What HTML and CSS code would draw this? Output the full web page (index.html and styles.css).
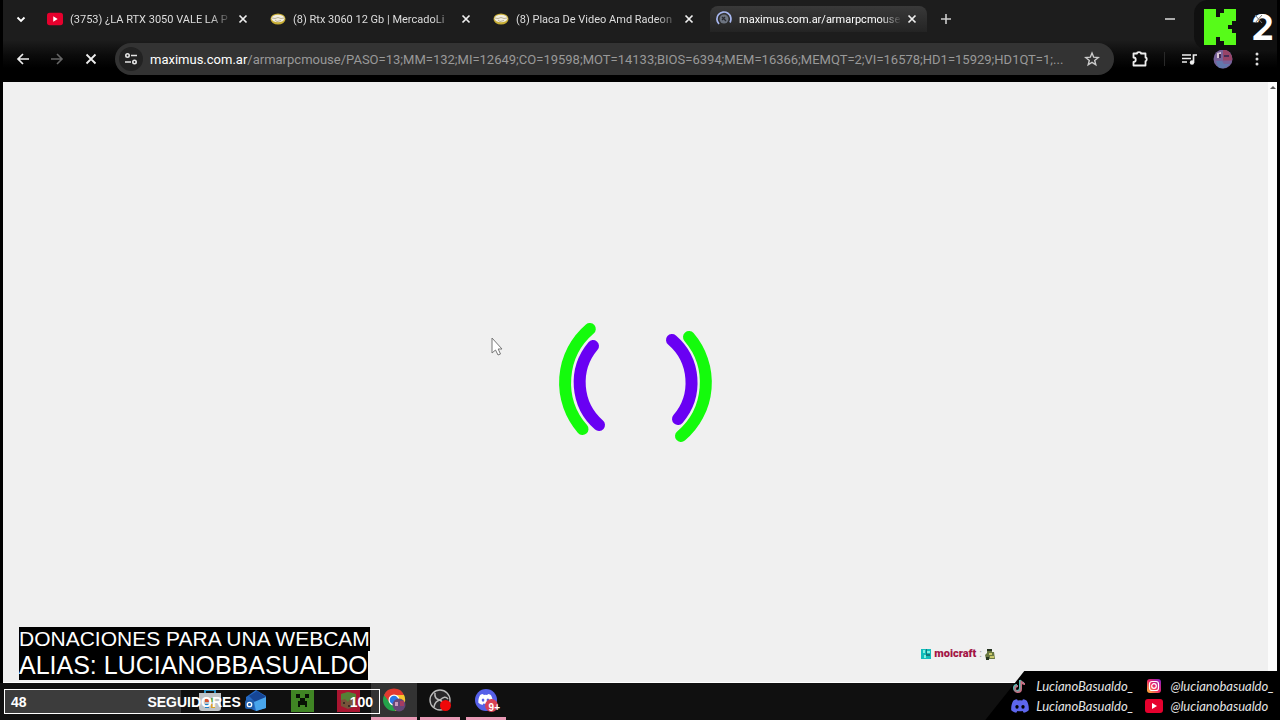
FILE: index.html
```html
<!DOCTYPE html>
<html lang="es">
<head>
<meta charset="utf-8">
<title>maximus.com.ar</title>
<link rel="stylesheet" href="styles.css">
</head>
<body>
<svg class="defs" aria-hidden="true">
  <symbol id="close" viewBox="0 0 12 12"><path d="M2.500 2.500l7 7m0-7l-7 7" fill="none" stroke="currentColor" stroke-width="1.700"/></symbol>
  <symbol id="youtube" viewBox="0 0 18 14"><rect width="18" height="14" rx="3" fill="#e6002d"/><path d="M7 4l5 3-5 3z" fill="#fff"/></symbol>
  <symbol id="mercado" viewBox="0 0 16 12"><ellipse cx="8" cy="6" rx="7.500" ry="5.500" fill="#c7ad35"/><ellipse cx="8" cy="5.500" rx="6.500" ry="3.800" fill="#f2eee0"/><path d="M2 5l3 .5 3-1 3 1 3-.5M5 7l2 1.500 2-.5 2-.5" fill="none" stroke="#a99f80" stroke-width=".8"/></symbol>
  <symbol id="discord" viewBox="0 0 24 18"><path d="M8 0C5 .5 3.500 1.500 3 2 1 5.500 0 9.500.300 14.500 2.500 16.500 5 17.500 7 18l1.500-2.500q3.500 1 7 0L17 18c2-.5 4.500-1.500 6.700-3.500C24 9.500 23 5.500 21 2c-.5-.5-2-1.500-5-2l-1 1.600q-3-.5-6 0z" fill="currentColor"/><ellipse cx="8" cy="10" rx="2.200" ry="2.500"/><ellipse cx="16" cy="10" rx="2.200" ry="2.500"/></symbol>
</svg>

<header class="browser">
  <div class="tabstrip">
    <button class="icon-btn tab-search" aria-label="Buscar pestañas"><svg width="12" height="12" viewBox="0 0 12 12"><path d="M2.500 4.500L6 8l3.500-3.500" fill="none" stroke="#fff" stroke-width="1.800"/></svg></button>
    <nav class="tabs">
      <div class="tab"><svg class="favicon"><use href="#youtube"/></svg><span class="tab-title">(3753) ¿LA RTX 3050 VALE LA P</span><button class="icon-btn tab-close" aria-label="Cerrar"><svg width="12" height="12"><use href="#close"/></svg></button></div>
      <div class="tab"><svg class="favicon"><use href="#mercado"/></svg><span class="tab-title">(8) Rtx 3060 12 Gb | MercadoLi</span><button class="icon-btn tab-close" aria-label="Cerrar"><svg width="12" height="12"><use href="#close"/></svg></button></div>
      <div class="tab"><svg class="favicon"><use href="#mercado"/></svg><span class="tab-title">(8) Placa De Video Amd Radeon</span><button class="icon-btn tab-close" aria-label="Cerrar"><svg width="12" height="12"><use href="#close"/></svg></button></div>
      <div class="tab active"><svg class="favicon" viewBox="0 0 16 16"><circle cx="8" cy="8" r="4.500" fill="#6d7480"/><path d="M6 6l4 4M6 9l3-3" stroke="#292b31" stroke-width="1.300"/><path d="M3 13A7 7 0 1 1 14 11.500" fill="none" stroke="#a8b8f0" stroke-width="1.700"/></svg><span class="tab-title">maximus.com.ar/armarpcmouse</span><button class="icon-btn tab-close" aria-label="Cerrar"><svg width="12" height="12"><use href="#close"/></svg></button></div>
    </nav>
    <button class="icon-btn new-tab" aria-label="Nueva pestaña"><svg width="12" height="12" viewBox="0 0 12 12"><path d="M6 1v10M1 6h10" stroke="#ccc" stroke-width="1.600"/></svg></button>
    <button class="icon-btn minimize" aria-label="Minimizar"><svg width="10" height="10" viewBox="0 0 10 10"><path d="M0 5h10" stroke="#ddd" stroke-width="1.500"/></svg></button>
  </div>
  <div class="toolbar">
    <div class="nav-buttons">
      <button class="icon-btn" aria-label="Atrás"><svg width="14" height="14" viewBox="0 0 14 14"><path d="M13 7H2M7 2L2 7l5 5" fill="none" stroke="#eee" stroke-width="1.700"/></svg></button>
      <button class="icon-btn" aria-label="Adelante"><svg width="14" height="14" viewBox="0 0 14 14"><path d="M1 7h11M7 2l5 5-5 5" fill="none" stroke="#666" stroke-width="1.600"/></svg></button>
      <button class="icon-btn" aria-label="Detener"><svg width="14" height="14" viewBox="0 0 14 14"><path d="M2.500 2.500l9 9m0-9l-9 9" stroke="#eee" stroke-width="1.800"/></svg></button>
    </div>
    <div class="address">
      <button class="icon-btn site-info" aria-label="Información del sitio"><svg width="14" height="14" viewBox="0 0 14 14"><g fill="none" stroke="#e4e4e4" stroke-width="1.600"><circle cx="3.500" cy="3.500" r="1.700"/><path d="M7 3.500h6M1 10h6"/><circle cx="10.500" cy="10" r="1.700"/></g></svg></button>
      <label class="domain" for="url">maximus.com.ar</label>
      <input class="path" id="url" type="text" value="/armarpcmouse/PASO=13;MM=132;MI=12649;CO=19598;MOT=14133;BIOS=6394;MEM=16366;MEMQT=2;VI=16578;HD1=15929;HD1QT=1;...">
      <button class="icon-btn" aria-label="Favorito"><svg width="16" height="16" viewBox="0 0 16 16"><path d="M8 2l1.700 4.200 4.500.3-3.500 2.900 1.100 4.400L8 11.400l-3.800 2.400 1.100-4.400L1.800 6.500l4.500-.3z" fill="none" stroke="#ccc" stroke-width="1.400"/></svg></button>
    </div>
    <div class="actions">
      <button class="icon-btn" aria-label="Extensiones"><svg width="18" height="18" viewBox="0 0 18 18"><path d="M2.500 3.500h3.500a2 1.400 0 0 1 4 0h4.500v4a1.200 1.800 0 0 1 0 3.600v4.400h-12v-3.500a2 2 0 0 0 0-4.500z" fill="none" stroke="#eee" stroke-width="1.800" stroke-linejoin="round"/></svg></button>
      <span class="separator"></span>
      <button class="icon-btn" aria-label="Multimedia"><svg width="16" height="14" viewBox="0 0 16 14"><path d="M1 3h9M1 6.500h9M1 10h5" stroke="#eee" stroke-width="1.700"/><path d="M12.500 10.500V3H16" fill="none" stroke="#eee" stroke-width="1.700"/><circle cx="11" cy="10.500" r="2.200" fill="#eee"/></svg></button>
      <button class="icon-btn" aria-label="Perfil"><svg width="20" height="20" viewBox="0 0 20 20"><circle cx="10" cy="10" r="9.500" fill="#78629a"/><path d="M10 .500a9.500 9.500 0 0 1 9 11H10z" fill="#984468"/><path d="M4 4l4-1v6H4z" fill="#d9c6d8"/><path d="M6 5h2v4H6zM11 6h5v2h-5z" fill="#472c55"/><path d="M3 12h6l2 3h6a9 9 0 0 1-12 3z" fill="#6278ad"/></svg></button>
      <button class="icon-btn" aria-label="Menú"><svg width="4" height="16" viewBox="0 0 4 16" fill="#ddd"><circle cx="2" cy="3" r="1.500"/><circle cx="2" cy="8" r="1.500"/><circle cx="2" cy="13" r="1.500"/></svg></button>
    </div>
  </div>
  <aside class="kick"><svg width="32" height="36" viewBox="0 0 32 36"><path d="M0 0h12v8h4V4h4V0h12v12h-4v4h-4v4h4v4h4v12H20v-4h-4v-4h-4v8H0z" fill="#57fb19"/></svg><span>2</span><svg class="maximize" width="9" height="10" viewBox="0 0 9 10"><path d="M1 1l7 8m0-8L1 9" stroke="#777" stroke-width="1"/></svg></aside>
</header>

<main class="page">
  <svg class="loader" viewBox="0 0 152 152" width="152" height="152" role="img" aria-label="Cargando"><g fill="none" stroke-width="12" stroke-linecap="round"><path d="M29.800 23A70.500 70.500 0 0 0 22.500 123M129 31A70 70 0 0 1 121 130" stroke="#14fb0c"/><path d="M33 40A56.500 56.500 0 0 0 39 119M112 34A56 56 0 0 1 118 113" stroke="#6900f3"/></g></svg>
  <div class="scrollbar"><svg width="6" height="4" viewBox="0 0 6 4"><path d="M0 4l3-3 3 3z" fill="#555"/></svg></div>
</main>

<footer class="taskbar">
  <button class="icon-btn app" aria-label="Tienda"><svg width="24" height="24" viewBox="0 0 24 24"><path d="M7 7V2h10v5" fill="none" stroke="#2a91c6" stroke-width="2"/><path d="M1 5h22v15q0 3-3 3H4q-3 0-3-3z" fill="#bfc3c6"/><path d="M7 10h4v4H7z" fill="#d8562c"/><path d="M13 10h4v4h-4z" fill="#5fa638"/><path d="M7 16h4v4H7z" fill="#1d81c7"/><path d="M13 16h4v4h-4z" fill="#dca528"/></svg></button>
  <button class="icon-btn app" aria-label="Correo"><svg width="24" height="24" viewBox="0 0 24 24"><path d="M2 9L12 2l10 6v12l-10 3-10-4z" fill="#2469c5"/><path d="M5 8l8-5 9 6-10 6z" fill="#164696"/><path d="M10 14l12-5v11l-10 3z" fill="#49a6ec"/><rect x="1" y="12" width="9" height="9" rx="2" fill="#205eaa"/><circle cx="5.500" cy="16.500" r="2.200" fill="none" stroke="#fff" stroke-width="1.300"/></svg></button>
  <button class="icon-btn app" aria-label="Minecraft"><svg width="24" height="24" viewBox="0 0 24 24"><path d="M1 1h23v23H1z" fill="#408524"/><path d="M6 6h4v4H6zM15 6h4v4h-4zM10 10h5v3h2v6h-2v-2h-5v2H8v-6h2z" fill="#071104"/></svg></button>
  <button class="icon-btn app" aria-label="Minecraft Launcher"><svg width="24" height="24" viewBox="0 0 24 24"><path d="M1 1h23v23H1z" fill="#a91530"/><path d="M5 6l7-2 8 2v12l-8 3-7-3z" fill="#78533a"/><path d="M5 6l7-2 8 2v4l-3 2-2-2-3 4-3-3-4 1z" fill="#568036"/><path d="M7 14h2v2H7zM12 17h3v2h-3z" fill="#3c2b23"/></svg></button>
  <button class="icon-btn app open focused" aria-label="Chrome"><svg width="24" height="24" viewBox="0 0 24 24"><circle cx="12" cy="12" r="11" fill="#24a34a"/><path d="M2 7A11 11 0 0 1 22 7L12 10l-4 5z" fill="#e23a30"/><path d="M12 7h10a11 11 0 0 1-9 16l4-9z" fill="#f7c52d"/><circle cx="12" cy="12" r="5.500" fill="#fff"/><circle cx="12" cy="12" r="4.300" fill="#2878e6"/><circle cx="17" cy="17" r="6.500" fill="#654778"/><path d="M13 14h3v4h-3z" fill="#c999ba"/><path d="M18 13h4v5h-4z" fill="#a63c61"/></svg></button>
  <button class="icon-btn app open" aria-label="OBS"><svg width="24" height="24" viewBox="0 0 24 24"><circle cx="12" cy="12" r="10" fill="#282729" stroke="#bbb" stroke-width="1.400"/><path d="M7 5q-1 6 5 7 5-5 8-1M12 12q-5 1-6 7M12 12q5 3 2 8" fill="none" stroke="#bbb" stroke-width="1.500"/><circle cx="17.500" cy="17.500" r="5.500" fill="#f00808"/></svg></button>
  <button class="icon-btn app open" aria-label="Discord"><svg width="24" height="24" viewBox="0 0 24 24"><circle cx="12" cy="12" r="11" fill="#5660e8"/><svg class="discord-app" x="4" y="6" width="15" height="11"><use href="#discord"/></svg><circle cx="17.500" cy="17.500" r="6.500" fill="#d84156"/></svg><span class="badge">9+</span></button>
</footer>

<section class="donations"><p class="line-one">DONACIONES PARA UNA WEBCAM</p><p class="line-two">ALIAS: LUCIANOBBASUALDO</p></section>
<section class="followers"><span class="fill" style="width:47%"></span><span>48</span><span class="followers-title">SEGUIDORES</span><span>100</span></section>
<section class="chat"><svg width="10" height="10" viewBox="0 0 10 10"><path d="M0 0h10v10H0z" fill="#13bdbb"/><path d="M2 1h2v3H2zM6 2h3v2H6zM3 6h2v3H3z" fill="#82f0de"/><path d="M5 0h1v5h3v2H5z" fill="#15777b"/></svg><b>moicraft</b><span>:</span><svg width="10" height="12" viewBox="0 0 10 12"><path d="M2 1h5v3h2l1 7H1L0 7l2-2z" fill="#697842"/><path d="M2 1h5v2H2zM1 9h3v3H1z" fill="#263421"/><path d="M4 5h3v2H4zM5 8h4v2H5z" fill="#c8c76a"/></svg></section>
<section class="socials">
  <a href="#tiktok"><svg width="18" height="14" viewBox="0 0 18 14"><g fill="none" stroke-width="2"><path d="M9 1v8a3 3 0 1 1-3-3M9 1q1 3 4 3" stroke="#55bdb8"/><path d="M10 2v8a3 3 0 1 1-3-3M10 2q1 3 4 3" stroke="#c86b80"/><path d="M9.500 1.500v8a3 3 0 1 1-3-3" stroke="#8c9292" stroke-width="1"/></g></svg>LucianoBasualdo_</a>
  <a href="#instagram"><svg width="18" height="14" viewBox="0 0 18 14"><defs><linearGradient id="insta" x1="0" y1="1" x2="1" y2="0"><stop stop-color="#ffbd35"/><stop offset=".5" stop-color="#ed2365"/><stop offset="1" stop-color="#7d22ca"/></linearGradient></defs><rect x="2" width="14" height="14" rx="3" fill="url(#insta)"/><g fill="none" stroke="#fff" stroke-width="1.200"><rect x="4.500" y="2.500" width="9" height="9" rx="2.500"/><circle cx="9" cy="7" r="2.300"/></g></svg>@lucianobasualdo_</a>
  <a href="#discord-link"><svg class="discord-social" width="18" height="14"><use href="#discord"/></svg>LucianoBasualdo_</a>
  <a href="#youtube-link"><svg width="18" height="14"><use href="#youtube"/></svg>@lucianobasualdo</a>
</section>
<svg class="cursor" width="12" height="20" viewBox="0 0 12 20" aria-hidden="true"><path d="M1 1v15l3.500-3 2.500 5 2.500-1-2.300-5H11z" fill="#fff" stroke="#777" stroke-width="1"/></svg>
</body>
</html>
```

FILE: styles.css
```css
* { box-sizing: border-box; }
body {
  margin: 0;
  min-height: 100vh;
  display: grid;
  grid-template-rows: auto 1fr auto;
  position: relative;
  overflow: hidden;
  background: #000;
  color: #fff;
  font-family: Roboto, "Noto Sans", sans-serif;
}
svg { flex-shrink: 0; }
.defs { position: absolute; width: 0; height: 0; }
.icon-btn {
  display: flex;
  align-items: center;
  justify-content: center;
  padding: 0;
  border: 0;
  background: none;
  color: inherit;
}

.browser {
  position: relative;
  margin: 0 3px;
  background: linear-gradient(#1d1d1d 0 40px, #0a0a0a 56px, #000 68px);
}
.tabstrip { display: flex; align-items: center; height: 38px; padding-right: 93px; }
.tab-search { width: 36px; height: 28px; margin-right: 2px; }
.tabs { display: flex; flex: 0 1 886px; gap: 6px; min-width: 0; }
.tab {
  display: flex;
  flex: 1;
  align-items: center;
  min-width: 0;
  height: 26px;
  padding: 0 9px 0 6px;
  border-radius: 8px 8px 0 0;
  color: #ddd;
  font-size: 11px;
}
.tab.active { background: linear-gradient(#393939, #242424); color: #fff; }
.favicon { width: 16px; height: 16px; margin-right: 7px; }
.tab-title {
  flex: 1;
  min-width: 0;
  overflow: hidden;
  white-space: nowrap;
  -webkit-mask-image: linear-gradient(90deg, #000 86%, transparent);
  mask-image: linear-gradient(90deg, #000 86%, transparent);
}
.tab-close { width: 12px; height: 20px; margin-left: 4px; color: #eee; }
.new-tab { width: 28px; height: 28px; margin-left: 5px; }
.minimize { width: 28px; height: 28px; margin-left: auto; }

.toolbar { display: flex; align-items: center; height: 44px; padding-bottom: 2px; }
.nav-buttons { display: flex; gap: 6px; padding: 0 10px 0 6px; }
.nav-buttons .icon-btn { width: 28px; height: 28px; }
.address {
  display: flex;
  flex: 1;
  align-items: center;
  min-width: 0;
  height: 32px;
  padding: 0 14px 0 4px;
  border-radius: 16px;
  background: #333;
  font-size: 13px;
}
.site-info { width: 24px; height: 24px; margin-right: 7px; border-radius: 50%; background: #222; }
.domain { color: #fff; }
.path {
  flex: 1;
  min-width: 0;
  padding: 0;
  border: 0;
  outline: 0;
  background: none;
  color: #999;
  font: inherit;
}
.actions { display: flex; align-items: center; padding: 0 6px 0 12px; gap: 6px; }
.actions .icon-btn { width: 28px; height: 28px; }
.separator { width: 1px; height: 14px; margin: 0 4px; background: #292929; }
.kick {
  position: absolute;
  top: 0;
  right: 0;
  display: flex;
  align-items: center;
  gap: 15px;
  height: 50px;
  padding: 4px 3px 0 10px;
  border-radius: 14px 0 0 14px;
  background: #101010;
  font: bold 36px Inter, sans-serif;
}
.maximize { position: absolute; top: 14px; right: 14px; }

.page {
  position: relative;
  display: grid;
  place-items: center;
  margin: 0 3px;
  padding-right: 9px;
  border-bottom: 1px solid #fff;
  background: #f0f0f0;
}
.loader { overflow: visible; }
.scrollbar { position: absolute; top: 0; right: 0; bottom: 0; width: 9px; background: #fcfcfc; }
.scrollbar svg { display: block; margin: 3px auto; }

.taskbar { display: flex; gap: 6px; height: 37px; padding-left: 190px; background: #101010; }
.app { position: relative; width: 40px; border-bottom: 3px solid transparent; }
.app.open { border-color: #e899b5; }
.app.focused { width: 46px; margin: 0 -3px; background: #333; }
.discord-app { color: #fff; fill: #5660e8; }
.badge {
  position: absolute;
  right: 6px;
  bottom: 4px;
  font: bold 10px "Liberation Sans", sans-serif;
}

.donations {
  position: absolute;
  left: 19px;
  bottom: 40px;
  display: flex;
  flex-direction: column;
  align-items: flex-start;
  font-family: "Liberation Sans", sans-serif;
  white-space: nowrap;
}
.donations p { margin: 0; background: #000; }
.line-one { font-size: 21px; line-height: 24px; }
.line-two { font-size: 25px; line-height: 29px; }
.followers {
  position: absolute;
  left: 4px;
  bottom: 6px;
  display: flex;
  align-items: center;
  justify-content: space-between;
  width: 376px;
  height: 25px;
  padding: 0 6px;
  border: 1px solid #fff;
  font: bold 14px "Liberation Sans", sans-serif;
}
.followers span { position: relative; }
.followers .fill { position: absolute; left: 0; top: 0; bottom: 0; background: #3c3c3c; }
.followers-title { margin-left: 12px; }
.chat {
  position: absolute;
  right: 285px;
  bottom: 60px;
  display: flex;
  align-items: center;
  gap: 3px;
  color: #a31545;
  font: 11px Roboto, sans-serif;
}
.chat b { font-weight: 900; }
.chat span { color: #999; }
.socials {
  position: absolute;
  right: 0;
  bottom: 0;
  display: grid;
  grid-template-columns: auto auto;
  align-content: center;
  column-gap: 12px;
  row-gap: 4px;
  height: 49px;
  padding: 0 6px 0 26px;
  clip-path: polygon(39px 0, 100% 0, 100% 100%, 0 100%);
  background: #000;
  font: italic 13px/16px Lato, sans-serif;
}
.socials a { display: flex; align-items: center; gap: 7px; color: #e4e4e4; text-decoration: none; }
.discord-social { color: #5d66ec; fill: #000; }
.cursor { position: absolute; left: 491px; top: 337px; }
```
